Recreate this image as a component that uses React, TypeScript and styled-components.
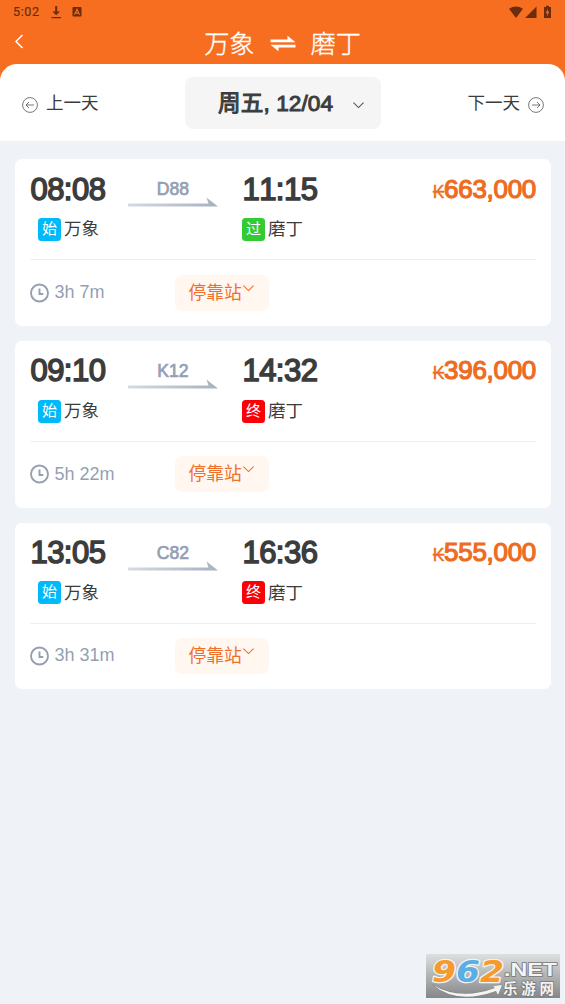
import React from "react";
import styled, { createGlobalStyle } from "styled-components";

const latin = `"Liberation Sans", "Noto Sans CJK SC", sans-serif`;

const GlobalStyle = createGlobalStyle`
  * { box-sizing: border-box; }
  body { margin: 0; background: #eff3f8; font-family: ${latin}; font-kerning: none; color: #3c3c3c; }
`;

const Page = styled.main`
  position: relative;
  width: 565px;
  height: 1004px;
  overflow: hidden;
  background: #eff3f8;
`;

const Header = styled.header`
  height: 84px;
  background: #f76e20;
  color: #fff;
`;

const StatusBar = styled.div`
  display: flex;
  align-items: center;
  height: 23px;
  padding: 0 13px;
  font: 400 12.5px/23px Roboto, sans-serif;
  letter-spacing: 0.6px;
  color: #6b2d0b;
  -webkit-text-stroke: 0.2px #6b2d0b;
`;

const StatusIcons = styled.svg<{ $push?: boolean }>`
  margin-left: ${(p) => (p.$push ? "auto" : "11px")};
`;

const TitleBar = styled.div`
  display: grid;
  grid-template-columns: 60px 1fr 60px;
  align-items: center;
  height: 41px;
`;

const BackIcon = styled.svg`
  margin: 0 0 5px 14px;
`;

const Title = styled.h1`
  display: flex;
  justify-content: center;
  align-items: center;
  gap: 15px;
  margin: 0;
  padding-top: 1px;
  font-weight: 300;
  font-size: 25.2px;
  line-height: 40px;
  -webkit-text-stroke: 0.35px #fff;
  svg { margin-top: -2px; }
`;

const DateBar = styled.nav`
  display: grid;
  grid-template-columns: 163px 196px 1fr;
  align-items: start;
  height: 77px;
  margin-top: -20px;
  padding: 13px 21px 0 22px;
  background: #fff;
  border-radius: 17px 17px 0 0;
`;

const DayLink = styled.div`
  display: flex;
  align-items: center;
  gap: 8px;
  height: 52px;
  font-size: 17.5px;
  line-height: 52px;
  &:last-child { justify-content: flex-end; }
  svg { margin-top: 4px; }
`;

const DatePicker = styled.div`
  display: flex;
  align-items: center;
  height: 52px;
  padding-left: 33px;
  border-radius: 8px;
  background: #f5f5f5;
  font-size: 22.6px;
  letter-spacing: 0.1px;
  white-space: nowrap;
  -webkit-text-stroke: 1px #3c3c3c;
  span { margin-top: -3px; }
  svg { margin: 5px 0 0 20px; }
`;

const TrainList = styled.section`
  display: flex;
  flex-direction: column;
  gap: 15px;
  padding: 18px 14px 0 15px;
`;

const Card = styled.article`
  height: 166.8px;
  padding: 0 15px;
  border-radius: 7px;
  background: #fff;
`;

const Journey = styled.div`
  display: grid;
  grid-template-columns: 98px 90px 24px 1fr auto;
  height: 101px;
  padding-top: 12.7px;
  border-bottom: 1px solid #eeeff0;
`;

const ArrivalStop = styled.div`
  grid-column: 4;
`;

const Time = styled.div`
  height: 36px;
  padding-left: 0.4px;
  font-size: 31px;
  line-height: 36px;
  letter-spacing: -0.5px;
  white-space: nowrap;
  -webkit-text-stroke: 1.5px #3c3c3c;
`;

const Station = styled.div<{ $inset?: boolean }>`
  display: flex;
  align-items: center;
  gap: 3px;
  height: 24px;
  margin: 9.7px 0 0 ${(p) => (p.$inset ? "8px" : "0")};
  font-size: 17.5px;
  line-height: 24px;
`;

const Badge = styled.span<{ $color: string }>`
  width: 23px;
  height: 23px;
  border-radius: 3.5px;
  background: ${(p) => p.$color};
  color: #fff;
  font-size: 15px;
  line-height: 22px;
  text-align: center;
`;

const TrainLeg = styled.div`
  display: flex;
  flex-direction: column;
  align-items: center;
  color: #949fb2;
  font-size: 17.6px;
  line-height: 22px;
  padding-top: 6.5px;
  -webkit-text-stroke: 0.7px #949fb2;
  svg { display: block; margin-top: -3px; }
`;

const Price = styled.div`
  display: flex;
  align-items: baseline;
  height: 34px;
  color: #ee6c22;
  font-size: 26px;
  line-height: 34px;
  letter-spacing: -0.3px;
  -webkit-text-stroke: 1.2px #ee6c22;
`;

const Kip = styled.span`
  font-size: 17.5px;
  -webkit-text-stroke: 0.4px #ee6c22;
`;

const Footer = styled.div`
  display: grid;
  grid-template-columns: 145px 94px;
  align-items: center;
  height: 65px;
`;

const Duration = styled.div`
  display: flex;
  align-items: center;
  gap: 4.5px;
  color: #949fb2;
  font-size: 18px;
  line-height: 20px;
  white-space: nowrap;
  span { margin-top: -1.4px; }
`;

const StopsButton = styled.button`
  display: flex;
  align-items: flex-start;
  height: 36px;
  padding: 0 0 0 13.5px;
  border: 0;
  border-radius: 7px;
  background: #fff7f0;
  color: #ef702c;
  font: 17.8px/36px ${latin};
  white-space: nowrap;
  svg { margin: 10px 0 0 1.5px; }
`;

const Watermark = styled.div`
  position: absolute;
  right: 5px;
  bottom: 6px;
  width: 134px;
  height: 44px;
  background: linear-gradient(#dedfe0, #858688);
  svg { display: block; overflow: visible; }
`;

const CircleArrow = ({ flip }: { flip?: boolean }) => (
  <svg width="16" height="16" viewBox="0 0 16 16" fill="none" stroke="#555" strokeWidth="0.8">
    <circle cx="8" cy="8" r="7.4" />
    <path d={flip ? "M4 8H12M9 5L12 8L9 11" : "M12 8H4M7 5L4 8L7 11"} />
  </svg>
);

const Chevron = ({ width, color }: { width: number; color: string }) => (
  <svg width={width} height={width * 0.6} viewBox="0 0 10 6" fill="none" stroke={color} strokeWidth="1">
    <path d="M0.4 0.6L5 5.1L9.6 0.6" />
  </svg>
);

const LegArrow = ({ id }: { id: string }) => (
  <svg width="90" height="10" viewBox="0 0 90 10">
    <defs>
      <linearGradient id={id}>
        <stop offset="0" stopColor="#d5dae3" />
        <stop offset="1" stopColor="#a8b1c0" />
      </linearGradient>
    </defs>
    <path d="M0 6.4H80.5L78.5 0.6L90 9.4H0Z" fill={`url(#${id})`} />
  </svg>
);

const ClockIcon = () => (
  <svg width="20" height="20" viewBox="0 0 20 20" fill="none" stroke="#949fb2">
    <circle cx="9.5" cy="10" r="8.5" strokeWidth="1.9" />
    <path d="M9.5 5.6V11H13.3" strokeWidth="1.9" />
  </svg>
);

type Stop = { time: string; label: string; color: string };
type Train = { code: string; from: Stop; to: Stop; duration: string; price: string };

const start = { label: "始", color: "#00b9fb" };
const end = { label: "终", color: "#fb0006" };

const trains: Train[] = [
  { code: "D88", from: { time: "08:08", ...start }, to: { time: "11:15", label: "过", color: "#33cb35" }, duration: "3h 7m", price: "663,000" },
  { code: "K12", from: { time: "09:10", ...start }, to: { time: "14:32", ...end }, duration: "5h 22m", price: "396,000" },
  { code: "C82", from: { time: "13:05", ...start }, to: { time: "16:36", ...end }, duration: "3h 31m", price: "555,000" },
];

const TrainCard = ({ train }: { train: Train }) => (
  <Card>
    <Journey>
      <div>
        <Time>{train.from.time}</Time>
        <Station $inset>
          <Badge $color={train.from.color}>{train.from.label}</Badge>万象
        </Station>
      </div>
      <TrainLeg>
        {train.code}
        <LegArrow id={`leg-${train.code}`} />
      </TrainLeg>
      <ArrivalStop>
        <Time>{train.to.time}</Time>
        <Station>
          <Badge $color={train.to.color}>{train.to.label}</Badge>磨丁
        </Station>
      </ArrivalStop>
      <Price>
        <Kip>₭</Kip>
        {train.price}
      </Price>
    </Journey>
    <Footer>
      <Duration>
        <ClockIcon />
        <span>{train.duration}</span>
      </Duration>
      <StopsButton>
        停靠站
        <Chevron width={11} color="#ef702c" />
      </StopsButton>
    </Footer>
  </Card>
);

export default function App() {
  return (
    <Page>
      <GlobalStyle />
      <Header>
        <StatusBar>
          5:02
          <StatusIcons width="32" height="14" viewBox="0 0 32 14" fill="#6b2d0b">
            <path d="M4.2 1H6.2V6.5H9L5.2 10.3L1.4 6.5H4.2ZM0.5 12H10V13.2H0.5Z" />
            <rect x="21.5" y="2" width="9" height="9.6" rx="1" />
            <path d="M23.5 9.8L26 4.2L28.5 9.8M24.5 8.1H27.5" fill="none" stroke="#f76e20" strokeWidth="1.1" />
          </StatusIcons>
          <StatusIcons $push width="44" height="14" viewBox="0 0 44 14" fill="#6b2d0b">
            <path d="M1 3.8Q8 -1 15 3.8L8 13ZM17 13L28.5 1.5V13Z" />
            <path d="M36 2H38V0.7H41V2H43V13H36Z" />
            <path d="M40 3.5L37.7 8H39.2L38.8 11.5L41.3 6.8H39.8Z" fill="#f76e20" />
          </StatusIcons>
        </StatusBar>
        <TitleBar>
          <BackIcon width="10" height="15" viewBox="0 0 10 15" fill="none" stroke="#fff" strokeWidth="1.5">
            <path d="M8.5 1L2 7.5L8.5 14" />
          </BackIcon>
          <Title>
            万象
            <svg width="26" height="17" viewBox="0 0 26 17" fill="#fff">
              <path d="M0.5 7.2V4.4H17.5V0.8L25.5 7.2ZM25.5 9.8V12.6H8.5V16.2L0.5 9.8Z" />
            </svg>
            磨丁
          </Title>
        </TitleBar>
      </Header>
      <DateBar>
        <DayLink>
          <CircleArrow />
          上一天
        </DayLink>
        <DatePicker>
          <span>周五, 12/04</span>
          <Chevron width={11} color="#555" />
        </DatePicker>
        <DayLink>
          下一天
          <CircleArrow flip />
        </DayLink>
      </DateBar>
      <TrainList>
        {trains.map((train) => (
          <TrainCard key={train.code} train={train} />
        ))}
      </TrainList>
      <Watermark>
        <svg width="134" height="44" viewBox="0 0 134 44" fontFamily="Liberation Sans, sans-serif" fontWeight="700">
          <g fontFamily="DejaVu Sans, sans-serif" fontSize="31" fontStyle="italic" stroke="#f3f3f3" strokeWidth="2.6" paintOrder="stroke" strokeLinejoin="round">
            <text x="6" y="28" textLength="72" lengthAdjust="spacingAndGlyphs">
              <tspan fill="#f79a2b">9</tspan><tspan fill="#5aaee3">6</tspan><tspan fill="#f79a2b">2</tspan>
            </text>
          </g>
          <g fill="#f4f4f4" stroke="#777" strokeWidth="1.4" paintOrder="stroke">
            <path d="M7 31Q34 47 69 34L67 32L76 31L72 41L70 37Q31 51 7 31Z" strokeWidth="0.7" />
            <text x="78" y="21.5" fontSize="18" textLength="53" lengthAdjust="spacingAndGlyphs">.NET</text>
            <text x="77" y="39.5" fontSize="14.5" fontFamily="Noto Sans CJK SC, sans-serif" textLength="51">乐游网</text>
          </g>
        </svg>
      </Watermark>
    </Page>
  );
}
